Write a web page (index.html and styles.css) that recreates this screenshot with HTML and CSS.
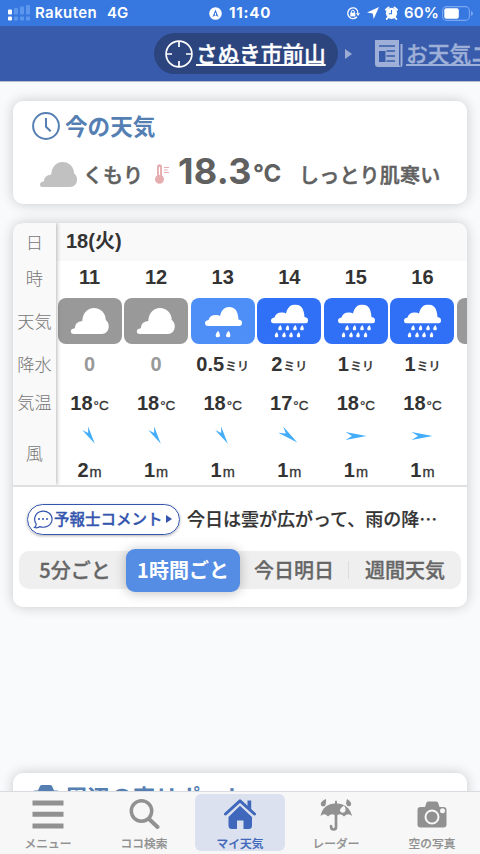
FILE: index.html
```html
<!DOCTYPE html>
<html lang="ja">
<head>
<meta charset="utf-8">
<meta name="viewport" content="width=device-width">
<title>マイ天気</title>
<link rel="stylesheet" href="styles.css">
</head>
<body>
<svg class="defs" width="0" height="0">
  <symbol id="cloud" viewBox="0 0 38 26"><path d="M3 26Q0 26 0 23.3Q0 20.800 4 20.300Q4 14 11.500 13C12 5 17 0 23 0C30 0 35 5 35 12Q38 14 38 18.500C38 23 35 26 31 26Z"/></symbol>
  <symbol id="raincloud" viewBox="0 0 37 19"><path d="M3 19Q0 19 0 16Q0 13.500 3.500 13Q5 8 10.500 8Q13 7.600 15 9C16 4 19 0 24 0C30 0 33 4 33.500 12.500Q37 13 37 15.700Q37 19 34 19Z"/></symbol>
  <symbol id="drop" viewBox="0 0 4 6"><path d="M2.400 0Q4 2.700 4 4Q4 6 2 6T0 4Q0 2.500 2.400 0Z"/></symbol>
  <symbol id="sun-rain" viewBox="0 0 64 46"><use href="#raincloud" x="14" y="9" width="37" height="19"/><use href="#drop" x="24.500" y="32.500" width="4.500" height="7"/><use href="#drop" x="35" y="32.500" width="4.500" height="7"/></symbol>
  <symbol id="heavy-rain" viewBox="0 0 64 46"><use href="#raincloud" x="14" y="6.500" width="37" height="19"/>
    <use href="#drop" x="21" y="27" width="4" height="5.500"/><use href="#drop" x="28.500" y="27" width="4" height="5.500"/><use href="#drop" x="36" y="27" width="4" height="5.500"/><use href="#drop" x="43" y="27" width="4" height="5.500"/>
    <use href="#drop" x="17.500" y="34" width="4" height="5.500"/><use href="#drop" x="25" y="34" width="4" height="5.500"/><use href="#drop" x="32" y="34" width="4" height="5.500"/><use href="#drop" x="39.500" y="34" width="4" height="5.500"/></symbol>
  <symbol id="cloudy" viewBox="0 0 64 46"><use href="#cloud" x="12.500" y="10" width="38.500" height="26"/></symbol>
  <symbol id="wind" viewBox="0 0 22 22"><path d="M.5 7L21.500 11L.5 15L7 11Z"/></symbol>
</svg>
<div class="app">
  <header class="status">
    <div class="status-left">
      <svg width="23" height="18" viewBox="0 0 23 18"><g fill="#fff"><rect y="5.500" width="4" height="5" rx="1"/><rect y="12.500" width="4" height="4" rx="1"/></g><g fill="#5d97ed"><rect x="6" y="4" width="4" height="6.500" rx="1"/><rect x="6" y="12.500" width="4" height="4" rx="1"/><rect x="12" y="2.500" width="4" height="8" rx="1"/><rect x="12" y="12.500" width="4" height="4" rx="1"/><rect x="18" y="1" width="4" height="9.500" rx="1"/><rect x="18" y="12.500" width="4" height="4" rx="1"/></g></svg>
      <span class="carrier">Rakuten</span><span class="net">4G</span>
    </div>
    <div class="status-time"><svg width="13" height="13" viewBox="0 0 13 13"><circle cx="6.500" cy="6.500" r="6.300" fill="#fff"/><path d="M6.500 2.500L9.500 10L6.500 8.300L3.500 10Z" fill="#3677e0"/><path d="M6.500 6v2" stroke="#fff"/></svg><span>11:40</span></div>
    <div class="status-right">
      <svg width="14" height="13" viewBox="0 0 14 13" fill="none" stroke="#fff" stroke-width="1.300"><path d="M10.500 2.200A5.300 5.300 0 1 0 11 9.800M10 1.800Q12 3.500 12 6.500"/><path d="M10 6.200h4l-2 2.800z" fill="#fff" stroke="none"/><rect x="4.300" y="5.700" width="5" height="3.700" fill="#fff" stroke="none"/><path d="M5.300 6V4.800a1.500 1.500 0 0 1 3 0V6" stroke-width="1"/></svg>
      <svg class="loc" width="12" height="12" viewBox="0 0 12 12" fill="#fff"><path d="M12 0L6.700 12L5.700 6.500L0 5.500Z"/></svg>
      <svg class="alarm" width="13" height="14" viewBox="0 0 13 14"><circle cx="6.500" cy="7.300" r="5.600" fill="#fff"/><path d="M1 3.800L3.600 1.400M12 3.800L9.400 1.400M3 11.500L1.700 13M10 11.500L11.300 13" stroke="#fff" stroke-width="1.900" stroke-linecap="round"/><path d="M6.500 4v3.700H3.800" fill="none" stroke="#3677e0" stroke-width="1.100"/></svg>
      <span class="pct">60%</span>
      <svg width="31" height="15" viewBox="0 0 31 15"><rect x=".6" y=".6" width="26.800" height="13.800" rx="4" fill="none" stroke="#79a6ee" stroke-width="1.100"/><rect x="2.300" y="2.300" width="14.500" height="10.400" rx="2" fill="#fff"/><path d="M29 5v5q2-.7 2-2.500T29 5" fill="#79a6ee"/></svg>
    </div>
  </header>
  <nav class="places">
    <a class="place current"><svg width="28" height="28" viewBox="0 0 28 28" fill="none" stroke="#fff" stroke-width="1.700"><circle cx="14" cy="14" r="12.900"/><path d="M14 1v6M14 21v6M1 14h6M21 14h6"/></svg><span>さぬき市前山</span></a>
    <svg class="tri" width="7" height="10" viewBox="0 0 7 10"><path d="M0 0L7 5L0 10Z" fill="#9babd2"/></svg>
    <a class="place next"><svg width="28" height="28" viewBox="0 0 28 28"><path d="M0 0H24V23.500Q24 27 27.500 27H3Q0 27 0 24Z" fill="#9eb0d7"/><path d="M25.500 4H27.500V25Q27.500 27 25.500 27Z" fill="#9eb0d7"/><path d="M4 6H20M11.500 11H20M11.500 16H20M11.500 21H20" stroke="#385cab" stroke-width="1.600"/><rect x="4" y="11" width="6.500" height="11" fill="#385cab"/></svg><span>お天気ニュース</span></a>
  </nav>
  <main>
    <section class="card now">
      <h2><svg width="28" height="28" viewBox="0 0 28 28" fill="none" stroke="#557fb3" stroke-width="2"><circle cx="14" cy="14" r="12.900"/><path d="M14 6v8.800l4.700 4.500"/></svg><span>今の天気</span></h2>
      <div class="now-row">
        <svg class="now-cloud" width="37" height="25" viewBox="0 0 38 26" preserveAspectRatio="none"><use href="#cloud" width="38" height="26"/></svg>
        <span class="cond">くもり</span>
        <svg class="thermo" width="15" height="20" viewBox="0 0 15 20"><path d="M2 2.700a2.500 2.500 0 0 1 5 0V11.500a4.500 4.500 0 1 1-5 0Z" fill="#e6adb0"/><path d="M4.500 3v8" stroke="#fff" stroke-width="1.200"/><path d="M9 3.500h5M9 6h3.500M9 8.500h5" stroke="#e6adb0" stroke-width="1.100"/></svg>
        <span class="temp">18.3</span><span class="deg">°C</span>
        <span class="feel">しっとり肌寒い</span>
      </div>
    </section>
    <section class="card forecast">
      <div class="table">
        <div class="labels"><span>日</span><span>時</span><span>天気</span><span>降水</span><span>気温</span><span>風</span></div>
        <div class="data">
          <div class="date">18(火)</div>
          <div class="hours">
            <div class="hour"><b>11</b><svg class="tile gray"><use href="#cloudy"/></svg><div class="rain none">0</div><div class="t">18<small>°C</small></div><svg class="wind r60"><use href="#wind"/></svg><div class="w">2<small>m</small></div></div>
            <div class="hour"><b>12</b><svg class="tile gray"><use href="#cloudy"/></svg><div class="rain none">0</div><div class="t">18<small>°C</small></div><svg class="wind r60"><use href="#wind"/></svg><div class="w">1<small>m</small></div></div>
            <div class="hour"><b>13</b><svg class="tile light"><use href="#sun-rain"/></svg><div class="rain">0.5<small>ミリ</small></div><div class="t">18<small>°C</small></div><svg class="wind r60"><use href="#wind"/></svg><div class="w">1<small>m</small></div></div>
            <div class="hour"><b>14</b><svg class="tile blue"><use href="#heavy-rain"/></svg><div class="rain">2<small>ミリ</small></div><div class="t">17<small>°C</small></div><svg class="wind r38"><use href="#wind"/></svg><div class="w">1<small>m</small></div></div>
            <div class="hour"><b>15</b><svg class="tile blue"><use href="#heavy-rain"/></svg><div class="rain">1<small>ミリ</small></div><div class="t">18<small>°C</small></div><svg class="wind"><use href="#wind"/></svg><div class="w">1<small>m</small></div></div>
            <div class="hour"><b>16</b><svg class="tile blue"><use href="#heavy-rain"/></svg><div class="rain">1<small>ミリ</small></div><div class="t">18<small>°C</small></div><svg class="wind"><use href="#wind"/></svg><div class="w">1<small>m</small></div></div>
            <div class="hour"><b></b><svg class="tile gray"></svg></div>
          </div>
        </div>
      </div>
      <div class="comment">
        <a class="comment-btn"><svg width="20" height="19" viewBox="0 0 20 19"><path d="M3 13.500A8.700 8 0 1 1 7 16.600Q4.500 18.500 1.500 17.500Q3.500 16 3 13.500Z" fill="none" stroke="#3455ae" stroke-width="1.200"/><g fill="#3455ae"><circle cx="6" cy="9" r="1"/><circle cx="10" cy="9" r="1"/><circle cx="14" cy="9" r="1"/></g></svg><span>予報士コメント</span><svg width="6" height="8" viewBox="0 0 6 8"><path d="M0 0L6 4L0 8Z" fill="#3455ae"/></svg></a>
        <span class="comment-text">今日は雲が広がって、雨の降⋯</span>
      </div>
      <div class="segment"><span class="s1">5分ごと</span><span class="s2">1時間ごと</span><span class="s3">今日明日</span><i></i><span class="s4">週間天気</span></div>
    </section>
    <section class="card report">
      <h2><svg width="28" height="24" viewBox="0 0 28 24"><path d="M3 5.500H6L8 1Q8.500 0 10 0H18Q19.500 0 20 1L22 5.500H25Q28 5.500 28 9V24H0V9Q0 5.500 3 5.500Z" fill="#557fb3"/></svg><span>周辺の空リポート</span></h2>
    </section>
  </main>
  <footer class="tabs">
    <a class="tab"><svg width="32" height="32" viewBox="0 0 32 32" fill="#919191"><path d="M.5 1.500h31v5H.5zM.5 12.800h31v5H.5zM.5 24.500h31v5H.5z"/></svg><span>メニュー</span></a>
    <a class="tab"><svg width="32" height="32" viewBox="0 0 32 32" fill="none" stroke="#919191"><circle cx="13.500" cy="12" r="10.200" stroke-width="3.500"/><path d="M21 20l8.500 8" stroke-width="4" stroke-linecap="round"/></svg><span>ココ検索</span></a>
    <a class="tab active"><svg width="34" height="32" viewBox="0 0 34 32"><path d="M2.500 15L17 1.800L31.500 15" fill="none" stroke="#3f67bb" stroke-width="3" stroke-linecap="round" stroke-linejoin="round"/><path d="M24.500 1.500h3.700v9l-3.700-3.300z" fill="#3f67bb"/><path d="M17 6.800L29 18V26.500Q29 30 25.500 30H20.500V21.500H14V30H9Q5.500 30 5.500 26.500V18Z" fill="#3f67bb"/></svg><span>マイ天気</span></a>
    <a class="tab"><svg width="34" height="32" viewBox="0 0 34 32"><path d="M1.500 17Q4 5 16 4.500V2.500Q17 .5 18 2.500V4.500Q30 5 33 17Q29 13.500 25 17.500Q21 13.500 17 17Q13 13.500 9 17.500Q5.500 13.500 1.500 17Z" fill="#919191"/><path d="M17 15V28Q17 30.500 14.500 30.500Q12 30.500 12 27" fill="none" stroke="#919191" stroke-width="2.700" stroke-linecap="round"/><path d="M7 0Q7.500 7.500 4.500 7.500Q1.500 7.500 1.800 4.500Q2.200 2 7 0ZM28 0Q33 3 32 6Q31 8 28.500 7Q26 5 28 0Z" fill="#919191"/><path d="M25 6.500Q27 9 26.500 11.500Q25.500 14.500 22.800 13.500Q19.500 12 22 9Z" fill="#f7f7f7"/></svg><span>レーダー</span></a>
    <a class="tab"><svg width="32" height="32" viewBox="0 0 32 32"><path d="M4.500 8H9L10.500 3.500Q11 2.500 12.500 2.500H20Q21.500 2.500 22 3.500L23.500 8H27.500Q30.500 8 30.500 11V25.500Q30.500 28.500 27.500 28.500H4.500Q1.500 28.500 1.500 25.500V11Q1.500 8 4.500 8Z" fill="#919191"/><circle cx="16" cy="18" r="6.500" fill="#919191" stroke="#f7f7f7" stroke-width="2"/><circle cx="26.500" cy="11.700" r="2.500" fill="#f7f7f7"/></svg><span>空の写真</span></a>
  </footer>
</div>
</body>
</html>
```

FILE: styles.css
```css
* { box-sizing: border-box; }
body { margin: 0; font-family: "Liberation Sans", "Noto Sans CJK JP", sans-serif; }
svg { display: block; flex: none; }
.defs { position: absolute; }
.app { width: 480px; height: 854px; display: flex; flex-direction: column; overflow: hidden; background: #f9fafc; white-space: nowrap; }
.status { height: 26px; flex: none; display: grid; grid-template-columns: 200px 80px 200px; align-items: center; background: #3677e0; color: #fff; font: 600 15px/26px Inter, sans-serif; }
.status > div { display: flex; align-items: center; height: 26px; }
.status-left { padding-left: 8px; }
.carrier { margin-left: 4px; letter-spacing: .4px; }
.net { margin-left: 10px; }
.status-time { padding-left: 9px; gap: 7px; }
.status-time span { font-weight: 700; letter-spacing: .8px; }
.status-right { padding-left: 66px; }
.loc { margin-left: 7px; }
.alarm { margin-left: 6px; }
.pct { width: 35px; margin: 0 3px 0 6px; font-weight: 600; letter-spacing: .1px; }
.places { height: 56px; flex: none; display: flex; align-items: center; padding-left: 154px; background: #385cab; border-bottom: 1px solid #b8bdc8; }
.place { flex: none; display: flex; align-items: center; gap: 3px; font: 500 21.700px/30px "Noto Sans CJK JP", sans-serif; -webkit-text-stroke: .35px; }
.place span { height: 30px; line-height: 28px; text-decoration: underline; text-decoration-thickness: 2px; text-underline-offset: 2px; text-decoration-skip-ink: none; }
.current { width: 184px; height: 41px; padding-left: 11px; border-radius: 21px; background: #2c457e; color: #fff; }
.tri { margin: 0 23px 0 7px; }
.next { color: #9eb0d7; }
main { flex: 1; min-height: 0; display: flex; flex-direction: column; padding: 19px 13px 0; overflow: hidden; }
.card { flex: none; background: #fff; border-radius: 10px; box-shadow: 0 0 13px rgba(0,0,0,.2); }
.card h2 { margin: 0; display: flex; align-items: center; gap: 5px; color: #557fb3; font: 700 22.600px/30px "Noto Sans CJK JP", sans-serif; }
.now { height: 103px; padding: 10px 0 0 19px; }
.now-row { display: flex; height: 50px; align-items: center; padding: 6px 0 0 8px; margin-top: 4px; color: #606060; }
.now-cloud { fill: #c1c1c1; transform: translateY(1px); }
.cond, .feel { font: 500 20px/30px "Noto Sans CJK JP", sans-serif; transform: translateY(2px); -webkit-text-stroke: .5px; }
.cond { width: 72px; margin-left: 6px; }
.thermo { transform: translateY(1px); }
.temp { margin-left: 8px; width: 75px; font: 700 36px/40px Inter, sans-serif; transform: translateY(-2px); letter-spacing: .3px; }
.deg { width: 46px; font: 700 24px/30px Inter, sans-serif; transform: translateY(1px); }
.feel { letter-spacing: .2px; }
.forecast { height: 384px; margin-top: 19px; }
.table { height: 264px; display: flex; border-bottom: 2px solid #e0e0e0; border-radius: 10px 10px 0 0; overflow: hidden; }
.labels { width: 43px; flex: none; z-index: 1; display: grid; grid-template-rows: 37px 36px 49px 38px 38px 64px; align-items: center; justify-items: center; background: #f9f9f9; box-shadow: 1px 0 4px rgba(0,0,0,.28); color: #777; font: 300 17.300px/24px "Noto Sans CJK JP", sans-serif; }
.data { width: 411px; overflow: hidden; }
.date { height: 38px; padding-left: 10px; background: #f9f9f9; color: #333; font: 700 20px/37px "Liberation Sans", "Noto Sans CJK JP", sans-serif; }
.hours { display: flex; padding-left: 1.500px; gap: 2.600px; }
.hour { width: 64px; flex: none; display: flex; flex-direction: column; align-items: center; color: #333; font: 700 20px/36px "Liberation Sans", "Noto Sans CJK JP", sans-serif; }
.hour b { height: 37px; line-height: 33px; }
.tile { width: 64px; height: 46px; border-radius: 8px; fill: #fff; }
.gray { background: #999; }
.light { background: #4e8ff7; }
.blue { background: #3070f6; }
.rain { height: 39px; line-height: 41px; }
.none { color: #999; }
.hour small { font-size: 14.500px; font-weight: 500; margin-left: 1px; -webkit-text-stroke: .3px; }
.hour .rain small { font-size: 12px; }
.hour .t small { font-size: 13.500px; }
.t { height: 38px; line-height: 40px; }
.wind { width: 22px; height: 22px; margin-top: 4px; fill: #43adfa; }
.r60 { transform: rotate(58deg) scale(.87); }
.r38 { transform: rotate(38deg); }
.w { height: 36px; line-height: 46px; }
.comment { height: 64px; display: flex; align-items: center; padding: 0 0 0 14px; }
.comment-btn { width: 153px; height: 31px; flex: none; display: flex; align-items: center; padding-left: 5px; border: 1px solid #3455ae; border-radius: 16px; box-shadow: 0 1px 3px rgba(0,0,0,.3); color: #3455ae; font: 500 15.500px/28px "Noto Sans CJK JP", sans-serif; -webkit-text-stroke: .3px; }
.comment-btn span { margin: -2px 3px 0 1px; }
.comment-text { margin: -2px 0 0 7px; color: #333; font: 500 18px/28px "Noto Sans CJK JP", sans-serif; -webkit-text-stroke: .2px; }
.segment { width: 442px; height: 38px; display: flex; align-items: center; margin-left: 6px; border-radius: 10px; background: #efefef; color: #666; font: 500 20px/38px "Noto Sans CJK JP", sans-serif; text-align: center; -webkit-text-stroke: .3px; }
.s1 { width: 107px; padding-left: 5px; }
.s2 { width: 114px; height: 43px; line-height: 42px; border-radius: 9px; background: #558de5; color: #fff; font-weight: 700; box-shadow: 0 1px 12px rgba(0,0,0,.25); -webkit-text-stroke: 0; }
.s3 { width: 108px; }
.segment i { width: 1px; height: 18px; background: #dcdcdc; }
.s4 { width: 112px; }
.report { height: 200px; margin-top: 166px; padding: 9px 0 0 19px; }
.tabs { height: 63px; flex: none; z-index: 2; display: grid; grid-template-columns: repeat(5, 96px); justify-items: center; background: #f7f7f7; border-top: 1px solid #d8dbe0; }
.tab { width: 90px; height: 57px; margin-top: 2px; padding-top: 5px; display: flex; flex-direction: column; align-items: center; border-radius: 6px; color: #919191; font: 500 11.700px/20px "Noto Sans CJK JP", sans-serif; -webkit-text-stroke: .2px; }
.tab span { margin-top: 2px; }
.active { background: #dbe1ee; color: #3f67bb; }
```
